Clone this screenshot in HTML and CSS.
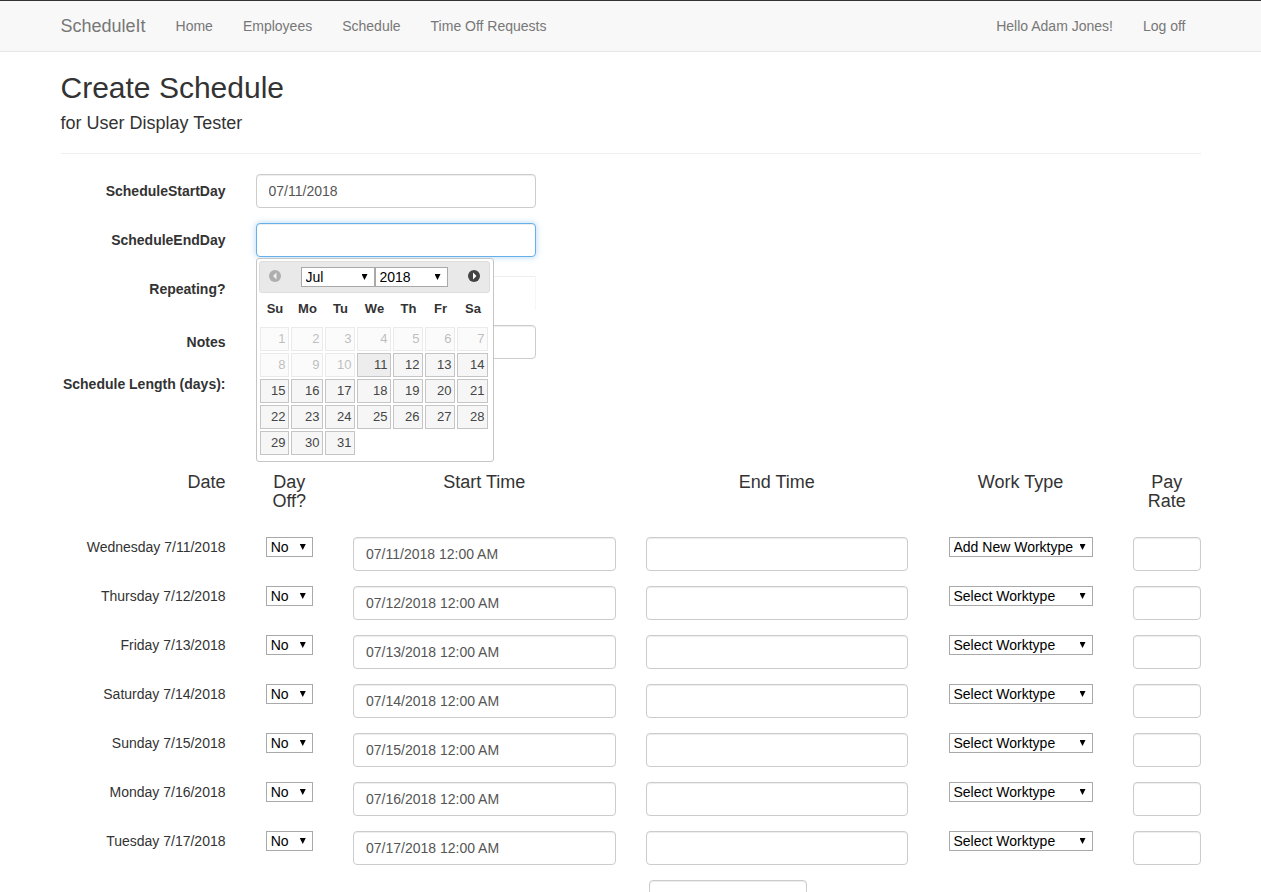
FILE: index.html
```html
<!DOCTYPE html>
<html lang="en">
<head>
<meta charset="utf-8">
<meta name="viewport" content="width=device-width, initial-scale=1">
<title>Create Schedule - ScheduleIt</title>
<link rel="stylesheet" href="styles.css">
</head>
<body>
<div class="page">
<header class="navbar">
  <nav class="container nav">
    <a class="brand" href="#">ScheduleIt</a>
    <a class="nav-link" href="#">Home</a>
    <a class="nav-link" href="#">Employees</a>
    <a class="nav-link" href="#">Schedule</a>
    <a class="nav-link" href="#">Time Off Requests</a>
    <a class="nav-link nav-user" href="#">Hello Adam Jones!</a>
    <a class="nav-link" href="#">Log off</a>
  </nav>
</header>
<main class="container">
  <h2 class="title">Create Schedule</h2>
  <h4 class="subtitle">for User Display Tester</h4>
  <hr class="rule">
  <form>
    <div class="row">
      <label class="label" for="start">ScheduleStartDay</label>
      <div class="field"><input class="control" id="start" type="text" value="07/11/2018"></div>
    </div>
    <div class="row">
      <label class="label" for="end">ScheduleEndDay</label>
      <div class="field">
        <input class="control active" id="end" type="text">
        <div class="picker">
          <div class="picker-head">
            <button class="arrow-btn faded" type="button" aria-label="Previous month" disabled><svg width="12" height="12" viewBox="0 0 12 12"><circle cx="6" cy="6" r="6" fill="#444"/><path d="M7.500 2.500v7L4 6z" fill="#fff"/></svg></button>
            <div class="picker-selects">
              <span class="select-wrap"><select class="select" aria-label="Month"><option>Jul</option></select></span>
              <span class="select-wrap"><select class="select" aria-label="Year"><option>2018</option></select></span>
            </div>
            <button class="arrow-btn" type="button" aria-label="Next month"><svg width="12" height="12" viewBox="0 0 12 12"><circle cx="6" cy="6" r="6" fill="#444"/><path d="M5 2.500v7L8.500 6z" fill="#fff"/></svg></button>
          </div>
          <table class="calendar">
            <colgroup><col class="c31"><col class="c34"><col class="c32"><col class="c36"><col class="c32"><col class="c32"><col class="c33"></colgroup>
            <thead><tr><th>Su</th><th>Mo</th><th>Tu</th><th>We</th><th>Th</th><th>Fr</th><th>Sa</th></tr></thead>
            <tbody>
              <tr><td><span class="day off">1</span></td><td><span class="day off">2</span></td><td><span class="day off">3</span></td><td><span class="day off">4</span></td><td><span class="day off">5</span></td><td><span class="day off">6</span></td><td><span class="day off">7</span></td></tr>
              <tr><td><span class="day off">8</span></td><td><span class="day off">9</span></td><td><span class="day off">10</span></td><td><a class="day current" href="#">11</a></td><td><a class="day" href="#">12</a></td><td><a class="day" href="#">13</a></td><td><a class="day" href="#">14</a></td></tr>
              <tr><td><a class="day" href="#">15</a></td><td><a class="day" href="#">16</a></td><td><a class="day" href="#">17</a></td><td><a class="day" href="#">18</a></td><td><a class="day" href="#">19</a></td><td><a class="day" href="#">20</a></td><td><a class="day" href="#">21</a></td></tr>
              <tr><td><a class="day" href="#">22</a></td><td><a class="day" href="#">23</a></td><td><a class="day" href="#">24</a></td><td><a class="day" href="#">25</a></td><td><a class="day" href="#">26</a></td><td><a class="day" href="#">27</a></td><td><a class="day" href="#">28</a></td></tr>
              <tr><td><a class="day" href="#">29</a></td><td><a class="day" href="#">30</a></td><td><a class="day" href="#">31</a></td><td></td><td></td><td></td><td></td></tr>
            </tbody>
          </table>
        </div>
      </div>
    </div>
    <div class="row">
      <label class="label" for="repeating">Repeating?</label>
      <div class="field"><input class="check" id="repeating" type="checkbox"></div>
    </div>
    <div class="row">
      <label class="label" for="notes">Notes</label>
      <div class="field"><input class="control" id="notes" type="text"></div>
    </div>
    <div class="row length-row">
      <span class="length-label">Schedule Length (days):</span>
    </div>

    <div class="row heads">
      <h4 class="head date">Date</h4>
      <h4 class="head">Day Off?</h4>
      <h4 class="head wide">Start Time</h4>
      <h4 class="head wide">End Time</h4>
      <h4 class="head type">Work Type</h4>
      <h4 class="head">Pay Rate</h4>
    </div>

    <div class="row">
      <div class="date">Wednesday 7/11/2018</div>
      <div class="center"><span class="select-wrap short"><select class="select" aria-label="Day off"><option>No</option><option>Yes</option></select></span></div>
      <input class="control wide" type="text" aria-label="Start time" value="07/11/2018 12:00 AM">
      <input class="control wide" type="text" aria-label="End time">
      <div class="center type"><span class="select-wrap long"><select class="select" aria-label="Work type"><option>Add New Worktype</option></select></span></div>
      <input class="control" type="text" aria-label="Pay rate">
    </div>
    <div class="row">
      <div class="date">Thursday 7/12/2018</div>
      <div class="center"><span class="select-wrap short"><select class="select" aria-label="Day off"><option>No</option><option>Yes</option></select></span></div>
      <input class="control wide" type="text" aria-label="Start time" value="07/12/2018 12:00 AM">
      <input class="control wide" type="text" aria-label="End time">
      <div class="center type"><span class="select-wrap long"><select class="select" aria-label="Work type"><option>Select Worktype</option></select></span></div>
      <input class="control" type="text" aria-label="Pay rate">
    </div>
    <div class="row">
      <div class="date">Friday 7/13/2018</div>
      <div class="center"><span class="select-wrap short"><select class="select" aria-label="Day off"><option>No</option><option>Yes</option></select></span></div>
      <input class="control wide" type="text" aria-label="Start time" value="07/13/2018 12:00 AM">
      <input class="control wide" type="text" aria-label="End time">
      <div class="center type"><span class="select-wrap long"><select class="select" aria-label="Work type"><option>Select Worktype</option></select></span></div>
      <input class="control" type="text" aria-label="Pay rate">
    </div>
    <div class="row">
      <div class="date">Saturday 7/14/2018</div>
      <div class="center"><span class="select-wrap short"><select class="select" aria-label="Day off"><option>No</option><option>Yes</option></select></span></div>
      <input class="control wide" type="text" aria-label="Start time" value="07/14/2018 12:00 AM">
      <input class="control wide" type="text" aria-label="End time">
      <div class="center type"><span class="select-wrap long"><select class="select" aria-label="Work type"><option>Select Worktype</option></select></span></div>
      <input class="control" type="text" aria-label="Pay rate">
    </div>
    <div class="row">
      <div class="date">Sunday 7/15/2018</div>
      <div class="center"><span class="select-wrap short"><select class="select" aria-label="Day off"><option>No</option><option>Yes</option></select></span></div>
      <input class="control wide" type="text" aria-label="Start time" value="07/15/2018 12:00 AM">
      <input class="control wide" type="text" aria-label="End time">
      <div class="center type"><span class="select-wrap long"><select class="select" aria-label="Work type"><option>Select Worktype</option></select></span></div>
      <input class="control" type="text" aria-label="Pay rate">
    </div>
    <div class="row">
      <div class="date">Monday 7/16/2018</div>
      <div class="center"><span class="select-wrap short"><select class="select" aria-label="Day off"><option>No</option><option>Yes</option></select></span></div>
      <input class="control wide" type="text" aria-label="Start time" value="07/16/2018 12:00 AM">
      <input class="control wide" type="text" aria-label="End time">
      <div class="center type"><span class="select-wrap long"><select class="select" aria-label="Work type"><option>Select Worktype</option></select></span></div>
      <input class="control" type="text" aria-label="Pay rate">
    </div>
    <div class="row">
      <div class="date">Tuesday 7/17/2018</div>
      <div class="center"><span class="select-wrap short"><select class="select" aria-label="Day off"><option>No</option><option>Yes</option></select></span></div>
      <input class="control wide" type="text" aria-label="Start time" value="07/17/2018 12:00 AM">
      <input class="control wide" type="text" aria-label="End time">
      <div class="center type"><span class="select-wrap long"><select class="select" aria-label="Work type"><option>Select Worktype</option></select></span></div>
      <input class="control" type="text" aria-label="Pay rate">
    </div>
    <div class="row">
      <div class="total"><input class="control" type="text" aria-label="Total"></div>
    </div>
  </form>
</main>
</div>
</body>
</html>
```

FILE: styles.css
```css
* { box-sizing: border-box; }
body {
  margin: 0;
  font: 14px/20px "Liberation Sans", Arial, sans-serif;
  color: #333;
  background: #fff;
}
/* The page scrolls inside the window, without a visible bar */
.page { height: 100vh; overflow-y: auto; scrollbar-width: none; }
.container { max-width: 1140px; margin: 0 auto; }

.navbar { background: #f8f8f8; border-top: 1px solid #333; border-bottom: 1px solid #e7e7e7; }
.nav { display: flex; height: 50px; padding: 15px 0; gap: 30px; }
.nav a { color: #777; text-decoration: none; white-space: nowrap; }
.nav .brand { font-size: 18px; }
.nav-user { margin-left: auto; }
.nav-link:last-child { margin-right: 15px; }

h2, h4 { font-weight: 400; }
.title { margin: 19px 0 10px; font-size: 30px; line-height: 33px; }
.subtitle { margin: 0; font-size: 18px; line-height: 19px; }
.rule { margin: 20px 0; border: 0; border-top: 1px solid #eee; }

.row {
  display: grid;
  grid-template-columns: repeat(12, minmax(0, 1fr));
  column-gap: 30px;
  align-items: start;
  margin-bottom: 15px;
}
.label { grid-column: span 2; padding-top: 7px; text-align: right; font-weight: 700; }
.field { grid-column: span 10; position: relative; }
.field .control { max-width: 280px; }
.length-row { margin-bottom: 79px; }
.length-label { grid-column: span 2; text-align: right; font-weight: 700; white-space: nowrap; }

.control {
  display: block;
  width: 100%;
  height: 34px;
  padding: 6px 12px;
  font: inherit;
  color: #555;
  background: #fff;
  border: 1px solid #ccc;
  border-radius: 4px;
  box-shadow: inset 0 1px 1px rgba(0, 0, 0, .075);
  outline: 0;
}
.active { border-color: #66afe9; box-shadow: inset 0 1px 1px rgba(0, 0, 0, .075), 0 0 6px rgba(102, 175, 233, .5); }
.check {
  display: block;
  appearance: none;
  width: 100%;
  max-width: 280px;
  height: 34px;
  margin: 4px 0 0;
  border: 1px solid #f5f5f5;
  border-top-color: #eee;
  border-bottom: 0;
}

.select-wrap { position: relative; display: block; }
.select-wrap::after {
  content: "";
  position: absolute;
  top: 7px;
  right: 7px;
  width: 6px;
  height: 6px;
  background: #000;
  clip-path: polygon(0 0, 100% 0, 50% 100%);
  pointer-events: none;
}
.select {
  appearance: none;
  display: block;
  width: 100%;
  height: 20px;
  padding: 0 4px;
  font: inherit;
  line-height: 18px;
  color: #000;
  background: #fff;
  border: 1px solid #a9a9a9;
  border-radius: 0;
}
.short { width: 47px; }
.long { width: 144px; }

.heads { margin-bottom: 26px; }
.head { margin: 0; font-size: 18px; line-height: 19px; text-align: center; }
.date { grid-column: span 2; text-align: right; }
.wide { grid-column: span 3; }
.type { grid-column: span 2; }
.center { display: flex; justify-content: center; }
.total { grid-column: 7 / span 3; padding-left: 3px; }
.total .control { max-width: 158px; }

.picker {
  position: absolute;
  top: 100%;
  left: 0;
  z-index: 1;
  width: 238px;
  margin-top: 1px;
  padding: 2px 3px 6px 2px;
  background: #fff;
  border: 1px solid #c5c5c5;
  border-radius: 3px;
}
.picker-head {
  display: flex;
  justify-content: space-between;
  height: 32px;
  padding: 5px 9px;
  background: #e9e9e9;
  border: 1px solid #ddd;
  border-radius: 3px;
}
.picker-selects { display: grid; grid-template-columns: 74px 73px; }
.picker-selects .select { padding: 0 3px 0 4px; }
.arrow-btn { display: block; height: 18px; padding: 0; border: 0; background: none; }
.arrow-btn svg { display: block; }
.faded { opacity: .35; }
.calendar { width: 230px; table-layout: fixed; border-collapse: collapse; font-size: 13px; }
.calendar th { height: 33px; padding: 0 0 2px 2px; font-weight: 700; }
.calendar td { padding: 1px; }
.calendar tbody tr:last-child td { padding-bottom: 0; }
.c31 { width: 31px; }
.c32 { width: 32px; }
.c33 { width: 33px; }
.c34 { width: 34px; }
.c36 { width: 36px; }
.day {
  display: block;
  height: 24px;
  padding: 0 2px;
  line-height: 22px;
  text-align: right;
  color: #454545;
  text-decoration: none;
  background: #f6f6f6;
  border: 1px solid #c5c5c5;
}
.off { opacity: .35; }
.current { background: #ededed; }
```
